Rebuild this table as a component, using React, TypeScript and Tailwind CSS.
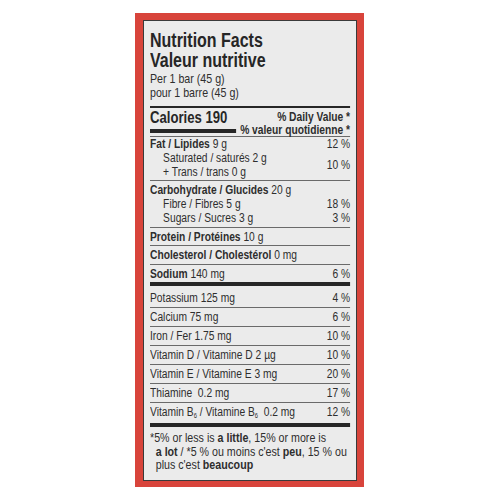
const FONT = "font-['Liberation_Sans',Arial,sans-serif]";

function Row({
  left,
  right,
  h = 'h-[19px]',
  last = false,
}: {
  left: React.ReactNode;
  right?: string;
  h?: string;
  last?: boolean;
}) {
  return (
    <div
      className={`flex items-center justify-between whitespace-nowrap ${h} leading-[18px] ${
        last ? '' : 'border-b border-[#6a6a6a]'
      }`}
    >
      <span>{left}</span>
      {right && <span>{right}</span>}
    </div>
  );
}

export default function App() {
  return (
    <div className={`w-[500px] h-[500px] bg-white flex justify-center ${FONT}`}>
      <div className="mt-[13px] w-[229px] h-[474px] bg-[#d8443b] pl-[8px] pt-[7px] ml-[-2px]">
        <div className="w-[214px] h-[461px] border border-[#3a3a3a] bg-[#ebebeb] px-[6px] pt-[9px] text-[#2e2e2e] text-[12.5px]">
          {/* label type is a condensed face: squeeze the whole column horizontally */}
          <div className="w-[244px] origin-left scale-x-[0.82]">
            {/* header */}
            <div className="font-bold text-[19.5px] leading-[20px] text-[#262626]">
              <div>Nutrition Facts</div>
              <div>Valeur nutritive</div>
            </div>
            <div className="mt-[2px] text-[13px] leading-[14px]">
              <div>Per 1 bar (45 g)</div>
              <div>pour 1 barre (45 g)</div>
            </div>
            <div className="mt-[6px] h-[2px] bg-[#262626]" />

            {/* calories */}
            <div className="flex justify-between h-[29px] border-b border-[#6a6a6a] whitespace-nowrap">
              <div>
                <div className="font-bold text-[16px] leading-[20px] text-[#262626]">Calories 190</div>
                <div className="mt-[1px] h-[4px] w-[105px] bg-[#262626]" />
              </div>
              <div className="pt-[3px] text-right font-bold leading-[13px] text-[12.5px]">
                <div>% Daily Value *</div>
                <div>% valeur quotidienne *</div>
              </div>
            </div>

            {/* fat */}
            <div className="h-[44px] leading-[14px] border-b border-[#6a6a6a] flex justify-between whitespace-nowrap">
              <div>
                <div>
                  <b>Fat / Lipides</b> 9 g
                </div>
                <div className="pl-[16px]">Saturated / saturés 2 g</div>
                <div className="pl-[16px]">+ Trans / trans 0 g</div>
              </div>
              <div className="flex flex-col items-end">
                <div>12 %</div>
                <div className="mt-[7px]">10 %</div>
              </div>
            </div>

            {/* carbs */}
            <div className="h-[47px] pt-[2px] leading-[14px] border-b border-[#6a6a6a] flex justify-between whitespace-nowrap">
              <div>
                <div>
                  <b>Carbohydrate / Glucides</b> 20 g
                </div>
                <div className="pl-[16px]">Fibre / Fibres 5 g</div>
                <div className="pl-[16px]">Sugars / Sucres 3 g</div>
              </div>
              <div className="flex flex-col items-end">
                <div>&nbsp;</div>
                <div>18 %</div>
                <div>3 %</div>
              </div>
            </div>

            <Row h="h-[18px]" left={<><b>Protein / Protéines</b> 10 g</>} />
            <Row h="h-[19px]" left={<><b>Cholesterol / Cholestérol</b> 0 mg</>} />
            <Row h="h-[17px]" last left={<><b>Sodium</b> 140 mg</>} right="6 %" />
            <div className="h-[4px] bg-[#262626]" />

            <div className="h-[22px] pt-[3px] border-b border-[#6a6a6a] flex justify-between leading-[18px]">
              <span>Potassium 125 mg</span>
              <span>4 %</span>
            </div>
            <Row left="Calcium 75 mg" right="6 %" />
            <Row left="Iron / Fer 1.75 mg" right="10 %" />
            <Row left="Vitamin D / Vitamine D 2 µg" right="10 %" />
            <Row left="Vitamin E / Vitamine E 3 mg" right="20 %" />
            <Row left={<>Thiamine&nbsp; 0.2 mg</>} right="17 %" />
            <Row
              h="h-[18px]"
              last
              left={
                <>
                  Vitamin B<sub className="text-[7px]">6</sub> / Vitamine B<sub className="text-[7px]">6</sub>&nbsp; 0.2 mg
                </>
              }
              right="12 %"
            />
            <div className="mt-[2px] h-[4px] bg-[#262626]" />

            {/* footnote */}
            <p className="pt-[4px] pl-[7px] -indent-[7px] text-[13px] leading-[13.5px] whitespace-nowrap">
              *5% or less is <b>a little</b>, 15% or more is
              <br />
              <b>a lot</b> / *5 % ou moins c'est <b>peu</b>, 15 % ou
              <br />
              plus c'est <b>beaucoup</b>
            </p>
          </div>
        </div>
      </div>
    </div>
  );
}
